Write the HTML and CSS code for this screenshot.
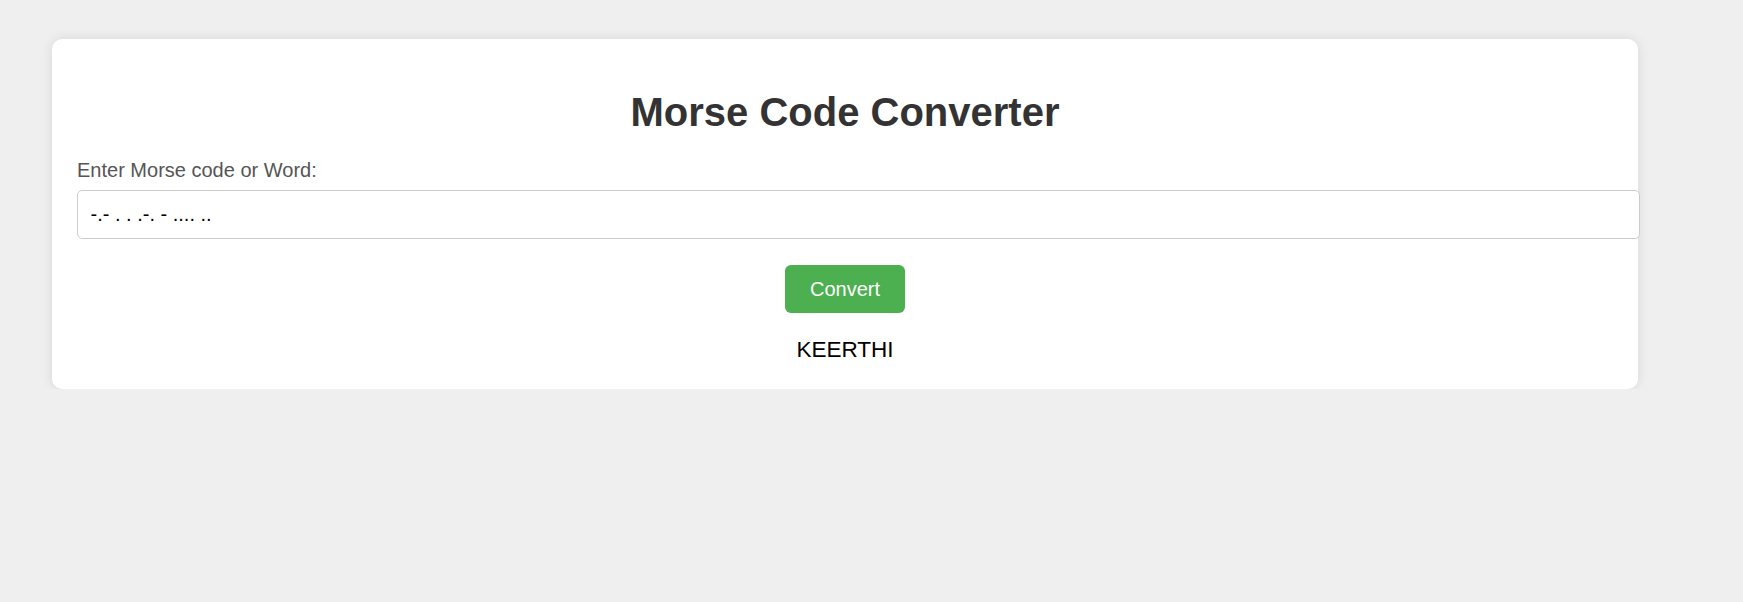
FILE: index.html
```html
<!DOCTYPE html>
<html lang="en">
<head>
<meta charset="utf-8">
<title>Morse Code Converter</title>
<link rel="stylesheet" href="styles.css">
</head>
<body>
  <div class="card">
    <h1 class="title">Morse Code Converter</h1>
    <label class="label" for="code">Enter Morse code or Word:</label>
    <input class="input" id="code" type="text" value="-.- . . .-. - .... ..">
    <div class="actions">
      <button class="btn" type="button">Convert</button>
    </div>
    <div class="result">KEERTHI</div>
  </div>
</body>
</html>
```

FILE: styles.css
```css
html, body {
  margin: 0;
  padding: 0;
}
body {
  background: #efefef;
  font-family: "Liberation Sans", Arial, sans-serif;
  padding: 39px 0 0 52px;
}
.card {
  box-sizing: border-box;
  width: 1586px;
  background: #ffffff;
  border-radius: 10px;
  box-shadow: 0 0 12px rgba(0, 0, 0, 0.1);
  padding: 25px 25px 26px;
}
.title {
  margin: 25px 0 24px;
  font-size: 40px;
  line-height: 46px;
  font-weight: bold;
  color: #333333;
  text-align: center;
}
.label {
  display: block;
  font-size: 20px;
  line-height: 23px;
  color: #555555;
  margin-bottom: 8px;
}
.input {
  display: block;
  width: 100%;
  margin: 0;
  padding: 12px 12px 12px 12.5px;
  font-family: "Liberation Sans", Arial, sans-serif;
  font-size: 20px;
  line-height: 23px;
  color: #000;
  border: 1px solid #cccccc;
  border-radius: 5px;
  outline: none;
  background: #fff;
}
.actions {
  display: flex;
  justify-content: center;
  margin-top: 26px;
}
.btn {
  background: #4caf50;
  color: #ffffff;
  border: none;
  border-radius: 6px;
  padding: 12.5px 25px;
  font-family: "Liberation Sans", Arial, sans-serif;
  font-size: 20px;
  line-height: 23px;
  cursor: pointer;
}
.result {
  margin-top: 24px;
  text-align: center;
  font-size: 22.5px;
  line-height: 26px;
  color: #000;
}
```
